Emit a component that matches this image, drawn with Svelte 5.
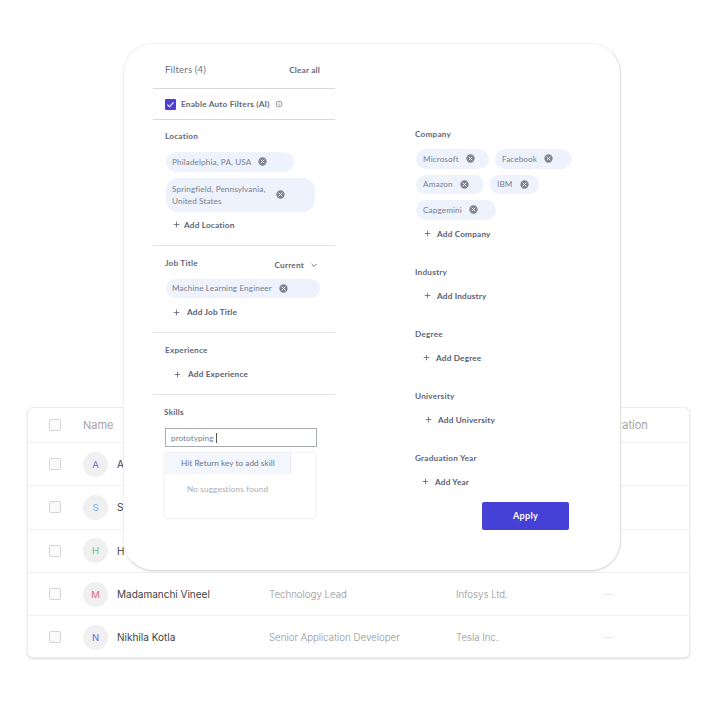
<script>
  const people = [
    { i: 'A', c: '#7a6be0', name: 'A' },
    { i: 'S', c: '#6fb2e8', name: 'S' },
    { i: 'H', c: '#6cc08f', name: 'H' },
    { i: 'M', c: '#e0648a', name: 'Madamanchi Vineel', title: 'Technology Lead', co: 'Infosys Ltd.', dash: '—' },
    { i: 'N', c: '#6a63d8', name: 'Nikhila Kotla', title: 'Senior Application Developer', co: 'Tesla Inc.', dash: '—' }
  ];
  const location = [
    { t: 'Philadelphia, PA, USA', w: 128 },
    { t: 'Springfield, Pennsylvania, United States', w: 149, wrap: true }
  ];
  const companyRows = [
    [{ t: 'Microsoft', w: 73 }, { t: 'Facebook', w: 77 }],
    [{ t: 'Amazon', w: 68 }, { t: 'IBM', w: 49 }],
    [{ t: 'Capgemini', w: 80 }]
  ];
  const rightSections = [
    { label: 'Industry', add: 'Add Industry', x: 10 },
    { label: 'Degree', add: 'Add Degree', x: 9 },
    { label: 'University', add: 'Add University', x: 11 },
    { label: 'Graduation Year', add: 'Add Year', x: 8 }
  ];
</script>

{#snippet xIcon()}
  <svg class="x" viewBox="0 0 10 10" aria-hidden="true">
    <circle cx="5" cy="5" r="4.6" fill="#7f8492" />
    <path d="M3.3 3.3l3.4 3.4M6.7 3.3l-3.4 3.4" stroke="#eef2fc" stroke-width="1.1" stroke-linecap="round" />
  </svg>
{/snippet}

{#snippet chip(c)}
  <div class="chip" class:wrap={c.wrap} style:width="{c.w}px">
    <span class="chip-text">{c.t}</span>
    {@render xIcon()}
  </div>
{/snippet}

{#snippet addRow(text, x, g)}
  <div class="add" style:padding-left="{x}px">
    <svg class="plus" style:margin-right="{g}px" viewBox="0 0 8 8" aria-hidden="true">
      <path d="M4 .8v6.4M.8 4h6.4" stroke="#59606f" stroke-width="0.9" />
    </svg>
    <span>{text}</span>
  </div>
{/snippet}

<div class="page">
  <div class="table">
    <div class="row head">
      <span class="box"></span>
      <span class="th">Name</span>
      <span></span>
      <span></span>
      <span class="th">Location</span>
    </div>
    {#each people as p}
      <div class="row">
        <span class="box"></span>
        <div class="person">
          <span class="avatar" style:color={p.c}>{p.i}</span>
          <span class="name">{p.name}</span>
        </div>
        <span class="muted">{p.title ?? ''}</span>
        <span class="muted co">{p.co ?? ''}</span>
        <span class="dash">{p.dash ?? ''}</span>
      </div>
    {/each}
  </div>

  <div class="modal">
    <div class="left">
      <div class="filters-head">
        <span class="filters">Filters (4)</span>
        <span class="clear">Clear all</span>
      </div>
      <div class="auto">
        <svg class="check" viewBox="0 0 11 11" aria-hidden="true">
          <rect width="11" height="11" rx="1" fill="#4f3fd0" />
          <path d="M2.4 5.7l2.1 2.1 4-4.4" fill="none" stroke="#fff" stroke-width="1.1" />
        </svg>
        <span class="auto-label">Enable Auto Filters (AI)</span>
        <svg class="info" viewBox="0 0 8 8" aria-hidden="true">
          <circle cx="4" cy="4" r="2.9" fill="none" stroke="#6a7180" stroke-width="0.7" />
          <path d="M4 3.5v2M4 2.3v.6" stroke="#6a7180" stroke-width="0.7" />
        </svg>
      </div>

      <section class="sec loc">
        <div class="label">Location</div>
        <div class="chips">
          {#each location as c}{@render chip(c)}{/each}
        </div>
        {@render addRow('Add Location', 9, 4)}
      </section>

      <section class="sec job">
        <div class="label-row">
          <span class="label">Job Title</span>
          <span class="current">Current
            <svg class="chev" viewBox="0 0 8 8" aria-hidden="true">
              <path d="M1.6 3l2.4 2.4L6.4 3" fill="none" stroke="#59606f" stroke-width="0.9" />
            </svg>
          </span>
        </div>
        <div class="chips">
          {@render chip({ t: 'Machine Learning Engineer', w: 154 })}
        </div>
        {@render addRow('Add Job Title', 9, 7)}
      </section>

      <section class="sec exp">
        <div class="label">Experience</div>
        {@render addRow('Add Experience', 10, 7)}
      </section>

      <section class="skills">
        <div class="label">Skills</div>
        <div class="input"><span>prototyping</span><i class="caret"></i></div>
        <div class="dropdown">
          <div class="hit">Hit Return key to add skill</div>
          <div class="none">No suggestions found</div>
        </div>
      </section>
    </div>

    <div class="right">
      <section class="rsec">
        <div class="label">Company</div>
        <div class="chips">
          {#each companyRows as r}
            <div class="chip-row">
              {#each r as c}{@render chip(c)}{/each}
            </div>
          {/each}
        </div>
        {@render addRow('Add Company', 10, 6)}
      </section>
      {#each rightSections as s}
        <section class="rsec">
          <div class="label">{s.label}</div>
          <div class="gap">{@render addRow(s.add, s.x, 6)}</div>
        </section>
      {/each}
      <button class="apply">Apply</button>
    </div>
  </div>
</div>

<style>
  :global(body) { margin: 0; background: #fff; }
  .page {
    position: relative;
    width: 706px;
    height: 701px;
    padding: 407px 0 0 27px;
    box-sizing: border-box;
    overflow: hidden;
    font-family: Lato, "Open Sans", sans-serif;
  }

  /* Table behind the modal */
  .table {
    width: 663px;
    height: 251px;
    box-sizing: border-box;
    background: #fff;
    border: 1px solid #ececec;
    border-radius: 6px;
    box-shadow: 0 1px 2px rgba(0, 0, 0, 0.14);
    font-family: Inter, sans-serif;
  }
  .row {
    display: grid;
    grid-template-columns: 34px 186px 187px 147px 1fr;
    align-items: center;
    height: 43.3px;
    padding-left: 21px;
    border-bottom: 1px solid #f1f1f1;
    box-sizing: border-box;
    font-size: 10px;
  }
  .row:last-child { border-bottom: 0; height: 42px; }
  .head { height: 35px; }
  .box {
    width: 12px;
    height: 12px;
    box-sizing: border-box;
    border: 1px solid #d6d6d6;
    border-radius: 2px;
    background: #fafafa;
  }
  .th { color: #a4a4a6; font-size: 11px; font-weight: 400; }
  .person { display: flex; align-items: center; gap: 9px; }
  .avatar {
    width: 25px;
    height: 25px;
    border-radius: 50%;
    background: #f0f0f0;
    display: flex;
    align-items: center;
    justify-content: center;
    font-size: 9.5px;
    font-weight: 400;
  }
  .name { color: #424244; }
  .muted { color: #929292; font-weight: 300; font-size: 9.7px; }
  .co { padding-top: 1px; }
  .dash { color: #e8e8e8; }

  /* Modal */
  .modal {
    position: absolute;
    left: 123px;
    top: 43px;
    width: 498px;
    height: 528px;
    box-sizing: border-box;
    padding-left: 30px;
    background: #fff;
    border-radius: 30px;
    border: 1px solid #f1f1f1;
    border-right-color: #e0e0e0;
    border-bottom-color: #dcdcdc;
    box-shadow: 0 1px 2px rgba(0, 0, 0, 0.08);
    display: grid;
    grid-template-columns: 181px 160px;
    column-gap: 81px;
    align-content: start;
    color: #4a5468;
  }
  .left { margin-left: -1px; }
  .filters-head {
    display: flex;
    justify-content: space-between;
    align-items: center;
    height: 45px;
    padding: 17px 15px 10px 12px;
    box-sizing: border-box;
    border-bottom: 1px solid #d6d8dc;
  }
  .filters { font-size: 9.5px; color: #6c7280; letter-spacing: 0.2px; }
  .clear { font-size: 8.2px; font-weight: 700; color: #636979; letter-spacing: 0.2px; }
  .auto {
    display: flex;
    align-items: center;
    height: 31px;
    box-sizing: border-box;
    padding-left: 12px;
    border-bottom: 1px solid #d6d8dc;
  }
  .check { width: 11px; height: 11px; margin-right: 5px; }
  .auto-label { font-size: 8.2px; font-weight: 700; color: #5f677a; letter-spacing: 0.22px; }
  .info { width: 8px; height: 8px; margin-left: 5px; }

  .sec { border-bottom: 1px solid #e2e3e6; padding: 11px 0 11px 12px; box-sizing: border-box; }
  .label { font-size: 8.2px; font-weight: 700; line-height: 12px; color: #5f677a; letter-spacing: 0.22px; }
  .label-row { display: flex; justify-content: space-between; align-items: center; height: 12px; padding-right: 17px; }
  .current {
    display: flex;
    align-items: center;
    gap: 6px;
    font-size: 8.2px;
    font-weight: 700;
    letter-spacing: 0.22px;
    color: #636979;
    margin-top: 4px;
  }
  .chev { width: 8px; height: 8px; }

  .chips { display: flex; flex-direction: column; align-items: flex-start; gap: 6px; margin-top: 9px; padding-left: 1px; }
  .loc { padding-top: 10px; }
  .loc .chips { margin-top: 10px; }
  .job .chips { margin-top: 10px; }
  .loc .add { margin-top: 4px; }
  .job .add { margin-top: 5px; }
  .exp .add { margin-top: 9px; }
  .chip-row { display: flex; gap: 6px; }
  .chip {
    display: flex;
    align-items: center;
    height: 19.5px;
    box-sizing: border-box;
    padding-left: 7px;
    background: #eef2fc;
    border-radius: 10px;
    font-size: 8.2px;
    letter-spacing: 0.1px;
    color: #767e8d;
  }
  .left .chip { padding-left: 6px; }
  .chip.wrap { height: 34px; border-radius: 12px; line-height: 12px; }
  .chip.wrap .chip-text { width: 97px; }
  .x { width: 9px; height: 9px; margin-left: 7px; flex: none; }

  .add {
    display: flex;
    align-items: center;
    height: 18px;
    margin-top: 5px;
    font-size: 8.2px;
    font-weight: 700;
    letter-spacing: 0.2px;
    color: #586175;
    margin-left: -1px;
  }
  .plus { width: 7px; height: 7px; flex: none; }

  .skills { padding: 11px 0 0 12px; }
  .skills .label { margin-left: -1px; }
  .input {
    display: flex;
    align-items: center;
    width: 152px;
    height: 19px;
    box-sizing: border-box;
    margin-top: 10px;
    padding-left: 5px;
    border: 1px solid #a9acb1;
    font-size: 8.2px;
    letter-spacing: 0.05px;
    color: #7a808c;
  }
  .caret { width: 1px; height: 10px; background: #555; margin-left: 2px; }
  .dropdown {
    width: 150px;
    height: 65px;
    margin-top: 6px;
    background: #fff;
    box-shadow: 0 0 3px rgba(0, 0, 0, 0.13);
  }
  .hit {
    width: 126px;
    height: 21px;
    box-sizing: border-box;
    padding-left: 16px;
    background: #f3f6fd;
    border-right: 1px solid #e8ebf2;
    font-size: 8.2px;
    line-height: 21px;
    letter-spacing: 0.05px;
    color: #6a7282;
  }
  .none {
    margin-top: 10px;
    padding-left: 22px;
    font-size: 8.2px;
    letter-spacing: 0.15px;
    color: #a9adb4;
  }

  .right { padding-top: 84px; margin-left: -1px; }
  .rsec { padding-bottom: 23px; }
  .rsec .add { margin-top: 5px; }
  .gap { padding-top: 4px; }
  .apply {
    display: block;
    margin: -12px 0 0 67px;
    width: 87px;
    height: 28px;
    background: #4540d6;
    border: 0;
    border-radius: 2px;
    color: #fff;
    font: 700 9px Lato, sans-serif;
    letter-spacing: 0.3px;
  }
</style>
